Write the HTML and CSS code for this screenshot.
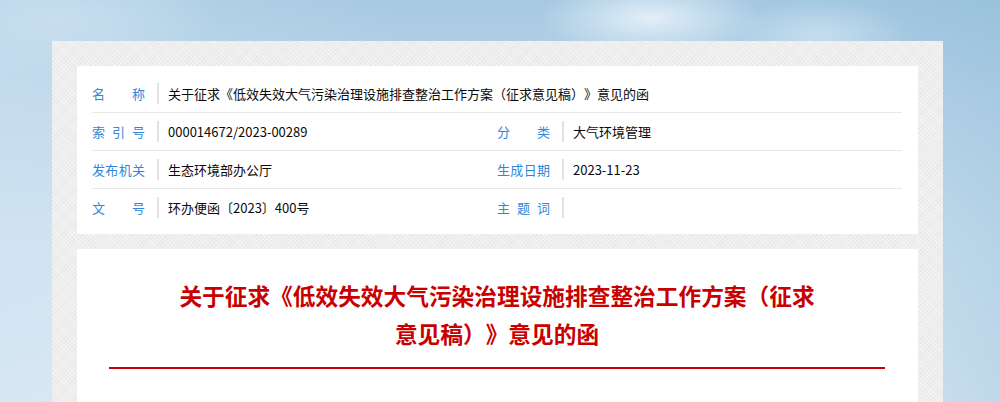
FILE: index.html
```html
<!DOCTYPE html>
<html lang="zh-CN">
<head>
<meta charset="utf-8">
<title>关于征求《低效失效大气污染治理设施排查整治工作方案（征求意见稿）》意见的函</title>
<link rel="stylesheet" href="styles.css">
</head>
<body>
<div class="sky">
  <div class="panel">
    <div class="card meta">
      <div class="row">
        <div class="item full">
          <div class="label"><span>名</span><span>称</span></div>
          <div class="bar"></div>
          <div class="value">关于征求《低效失效大气污染治理设施排查整治工作方案（征求意见稿）》意见的函</div>
        </div>
      </div>
      <div class="row">
        <div class="item">
          <div class="label"><span>索</span><span>引</span><span>号</span></div>
          <div class="bar"></div>
          <div class="value">000014672/2023-00289</div>
        </div>
        <div class="item">
          <div class="label"><span>分</span><span>类</span></div>
          <div class="bar"></div>
          <div class="value">大气环境管理</div>
        </div>
      </div>
      <div class="row">
        <div class="item">
          <div class="label"><span>发</span><span>布</span><span>机</span><span>关</span></div>
          <div class="bar"></div>
          <div class="value">生态环境部办公厅</div>
        </div>
        <div class="item">
          <div class="label"><span>生</span><span>成</span><span>日</span><span>期</span></div>
          <div class="bar"></div>
          <div class="value">2023-11-23</div>
        </div>
      </div>
      <div class="row last">
        <div class="item">
          <div class="label"><span>文</span><span>号</span></div>
          <div class="bar"></div>
          <div class="value">环办便函〔2023〕400号</div>
        </div>
        <div class="item">
          <div class="label"><span>主</span><span>题</span><span>词</span></div>
          <div class="bar"></div>
          <div class="value"></div>
        </div>
      </div>
    </div>
    <div class="card article">
      <h1 class="title">关于征求《低效失效大气污染治理设施排查整治工作方案（征求意见稿）》意见的函</h1>
      <div class="rule"></div>
    </div>
  </div>
</div>
</body>
</html>
```

FILE: styles.css
```css
html, body {
  margin: 0;
  padding: 0;
}

body {
  font-family: "Microsoft YaHei", "Noto Sans CJK SC", "Noto Sans", sans-serif;
  height: 402px;
  overflow: hidden;
  text-spacing-trim: space-all;
}

.sky {
  height: 402px;
  padding-top: 41px;
  box-sizing: border-box;
  background:
    radial-gradient(ellipse 110px 40px at 650px 18px, rgba(235, 245, 252, 0.85), rgba(235, 245, 252, 0) 100%),
    radial-gradient(ellipse 90px 35px at 820px 35px, rgba(215, 233, 246, 0.6), rgba(215, 233, 246, 0) 100%),
    radial-gradient(ellipse 160px 60px at 60px 20px, rgba(205, 226, 242, 0.7), rgba(205, 226, 242, 0) 100%),
    linear-gradient(90deg, rgba(205, 226, 241, 0.5) 0%, rgba(160, 198, 224, 0) 40%, rgba(160, 198, 224, 0) 75%, rgba(130, 180, 212, 0.35) 100%),
    linear-gradient(180deg, #a6c9e1 0%, #bcd6ea 25%, #d2e4f1 60%, #e0ecf5 100%);
}

.panel {
  width: 891px;
  margin-left: 52px;
  padding: 25px 25px 0 25px;
  box-sizing: border-box;
  height: 361px;
  background-color: #eeeeee;
  background-image:
    repeating-linear-gradient(45deg, rgba(255, 255, 255, 0.35) 0 1px, transparent 1px 3px),
    repeating-linear-gradient(-45deg, rgba(220, 220, 220, 0.35) 0 1px, transparent 1px 3px);
}

.card {
  background: #ffffff;
}

.meta {
  padding: 9px 16px 8px 15px;
}

.row {
  display: grid;
  grid-template-columns: 405px 405px;
  height: 37px;
  border-bottom: 1px solid #e9e9e9;
}

.row.last {
  border-bottom: none;
}

.item {
  display: flex;
  align-items: center;
  height: 37px;
  font-size: 13px;
}

.item.full {
  grid-column: 1 / span 2;
}

.label {
  width: 53px;
  display: flex;
  justify-content: space-between;
  color: #2f87d9;
  line-height: 20px;
}

.bar {
  width: 2px;
  height: 21px;
  margin-left: 12px;
  background: #e2e2e2;
}

.value {
  margin-left: 9px;
  color: #0a0a0a;
  line-height: 20px;
  white-space: nowrap;
}

.article {
  margin-top: 15px;
  padding: 28px 33px 0 32px;
  height: 126px;
}

.title {
  width: 652px;
  margin: 0 auto;
  font-size: 22.7px;
  font-weight: bold;
  line-height: 38px;
  color: #c80000;
  text-align: center;
}

.rule {
  margin-top: 14px;
  height: 2px;
  background: #c80000;
}
```
